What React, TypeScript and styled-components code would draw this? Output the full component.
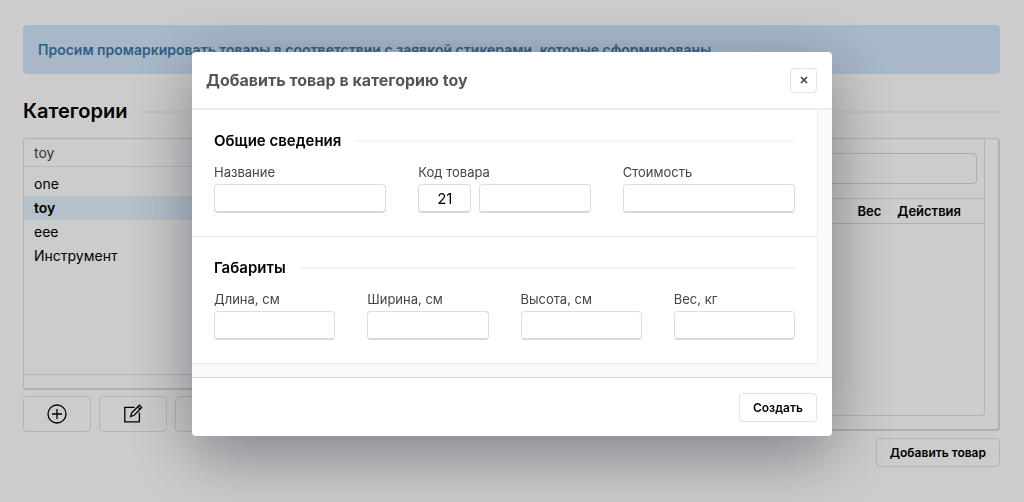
import React from 'react';
import styled, { createGlobalStyle } from 'styled-components';

const GlobalStyle = createGlobalStyle`
  *, *::before, *::after { box-sizing: border-box; }
  body {
    margin: 0;
    background: #fff;
    color: #000;
    font-family: Inter, "Liberation Sans", sans-serif;
    font-size: 14px;
  }
  button, input { font: inherit; color: inherit; }
`;

const Page = styled.main`
  min-height: 100vh;
  padding: 25px 24px 35px 23px;
`;

const Notice = styled.p`
  margin: 0;
  padding: 15px 15px 14px;
  border-radius: 4px;
  background: #d2e7fb;
  color: #3d76a8;
  font-size: 14px;
  font-weight: 600;
  line-height: 20px;
`;

const Divided = styled.div`
  display: flex;
  align-items: center;
  gap: 15px;

  &::after {
    content: '';
    flex: 1;
    height: 2px;
    background: #f4f4f4;
  }
`;

const PageHeading = styled(Divided).attrs({ as: 'h1' })`
  margin: 24px 0 13px;
  font-size: 20px;
  font-weight: 600;
  line-height: 27px;
`;

const Columns = styled.div`
  display: grid;
  grid-template-columns: 220px minmax(0, 1fr);
  align-items: start;
  gap: 16px;
`;

const Panel = styled.section`
  padding: 0 13px 13px 0;
  border: 1px solid #dcdcdc;
  border-right-width: 2px;
  border-bottom-width: 2px;
  border-radius: 4px;
`;

const CategoryPane = styled.div`
  height: 236px;
  border-right: 1px solid #dcdcdc;
  border-bottom: 1px solid #dcdcdc;
`;

const CategoryFilter = styled.input`
  display: block;
  width: 100%;
  height: 28px;
  padding: 0 10px;
  border: 0;
  border-bottom: 1px solid #e6e6e6;
  background: transparent;
  color: #444;
`;

const CategoryList = styled.ul`
  margin: 0;
  padding: 5px 0;
  list-style: none;
`;

const CategoryRow = styled.li<{ $active?: boolean }>`
  padding: 0 10px;
  background: ${({ $active }) => ($active ? '#e4f1fc' : 'transparent')};
  font-weight: ${({ $active }) => ($active ? 600 : 400)};
  line-height: 24px;
`;

const Toolbar = styled.div`
  display: grid;
  grid-template-columns: repeat(3, 1fr);
  gap: 8px;
  margin-top: 6px;
`;

const Button = styled.button`
  display: flex;
  align-items: center;
  justify-content: center;
  height: 29px;
  padding: 0 13px;
  border: 1px solid #e2e2e2;
  border-radius: 4px;
  background: #fff;
  font-size: 12px;
  font-weight: 600;
`;

const IconButton = styled(Button)`
  height: 36px;
  padding: 0;
`;

const ItemsPane = styled.div`
  min-height: 277px;
  padding-top: 14px;
  border-right: 1px solid #e0e0e0;
  border-bottom: 1px solid #e0e0e0;
  border-bottom-right-radius: 4px;
`;

const TextField = styled.input`
  display: block;
  width: 100%;
  min-width: 0;
  height: 29px;
  padding: 0 8px;
  border: 1px solid #dedede;
  border-bottom: 2px solid #d8d8d8;
  border-radius: 4px;
  background: #fff;
  font-size: 15px;
`;

const Search = styled.div`
  padding: 0 7px 14px 14px;
`;

const SearchField = styled(TextField)`
  height: 31px;
  border: 1px solid #d8d8d8;
`;

const ItemsTable = styled.table`
  width: 100%;
  border-collapse: collapse;
  border-top: 1px solid #dcdcdc;
  border-bottom: 1px solid #dcdcdc;
  font-size: 13px;

  th {
    height: 25px;
    padding: 0 8px;
    font-weight: 600;
    text-align: left;
  }
  th:first-child { width: 99%; }
  th:last-child { padding-right: 23px; }
`;

const PageActions = styled.div`
  display: flex;
  justify-content: flex-end;
  margin-top: 7px;
`;

const Overlay = styled.div`
  position: fixed;
  inset: 0;
  display: flex;
  align-items: flex-start;
  justify-content: center;
  padding-top: 52px;
  background: rgba(0, 0, 0, 0.2);
`;

const Dialog = styled.div`
  width: 640px;
  max-width: 100%;
  overflow: hidden;
  border-radius: 4px;
  background: #fff;
  box-shadow: 0 18px 66px rgba(24, 28, 46, 0.44);
`;

const DialogHeader = styled.header`
  display: flex;
  align-items: center;
  justify-content: space-between;
  height: 58px;
  padding: 0 15px 0 14px;
  border-bottom: 2px solid #ececec;
`;

const DialogTitle = styled.h2`
  margin: 0;
  color: #555;
  font-size: 16px;
  font-weight: 700;
  line-height: 20px;
`;

const CloseButton = styled(Button)`
  width: 27px;
  height: 25px;
  padding: 0;
  color: #444;
`;

const DialogBody = styled.div`
  padding: 0 14px 13px 0;
  background: #fafafa;
`;

const FormSection = styled.section`
  padding: 20px 22px 23px;
  border-right: 1px solid #ececec;
  border-bottom: 1px solid #ececec;
  background: #fff;
`;

const SectionHeading = styled(Divided).attrs({ as: 'h3' })`
  margin: 0 0 10px;
  font-size: 15px;
  font-weight: 600;
  line-height: 22px;
`;

const Fields = styled.div<{ $count: number }>`
  display: grid;
  grid-template-columns: repeat(${({ $count }) => $count}, minmax(0, 1fr));
  gap: 32px;
`;

const Label = styled.label`
  display: block;
  margin-bottom: 2px;
  color: #444;
  font-size: 13px;
  line-height: 20px;
`;

const CodeFields = styled.div`
  display: grid;
  grid-template-columns: 53px minmax(0, 1fr);
  gap: 8px;
`;

const CodePrefix = styled(TextField)`
  padding: 0;
  text-align: center;
`;

const DialogFooter = styled.footer`
  display: flex;
  justify-content: flex-end;
  padding: 15px 15px 14px;
  border-top: 1px solid #d9d9d9;
`;

const PlusIcon = () => (
  <svg width="20" height="20" viewBox="0 0 20 20" fill="none" stroke="#000" strokeWidth="1.3" aria-hidden="true">
    <circle cx="10" cy="10" r="9" />
    <path d="M10 5v10M5 10h10" />
  </svg>
);

const EditIcon = () => (
  <svg width="20" height="20" viewBox="0 0 20 20" fill="none" stroke="#000" strokeWidth="1.3" aria-hidden="true">
    <path d="M11.6 3.4H1.8v14.4h14.6V8.6" />
    <path d="M16.4 1.2l2.3 2.3-7.6 7.8-3.4 1.2 1-3.6zM14.7 2.9l2.3 2.3" />
  </svg>
);

const TrashIcon = () => (
  <svg width="20" height="20" viewBox="0 0 20 20" fill="none" stroke="#000" strokeWidth="1.3" aria-hidden="true">
    <path d="M3 5h14M7 5V2h6v3M5 5v13h10V5M8 8v7M12 8v7" />
  </svg>
);

const CloseIcon = () => (
  <svg width="8" height="8" viewBox="0 0 8 8" fill="none" stroke="currentColor" strokeWidth="1.7" aria-hidden="true">
    <path d="M1 1l6 6M7 1L1 7" />
  </svg>
);

const categories = ['one', 'toy', 'eee', 'Инструмент'];
const dimensions = [
  { id: 'length', label: 'Длина, см' },
  { id: 'width', label: 'Ширина, см' },
  { id: 'height', label: 'Высота, см' },
  { id: 'weight', label: 'Вес, кг' },
];

export default function App() {
  return (
    <>
      <GlobalStyle />
      <Page>
        <Notice>Просим промаркировать товары в соответствии с заявкой стикерами, которые сформированы</Notice>
        <PageHeading>Категории</PageHeading>
        <Columns>
          <div>
            <Panel>
              <CategoryPane>
                <CategoryFilter aria-label="Категория" defaultValue="toy" />
                <CategoryList>
                  {categories.map((name) => (
                    <CategoryRow key={name} $active={name === 'toy'}>{name}</CategoryRow>
                  ))}
                </CategoryList>
              </CategoryPane>
            </Panel>
            <Toolbar>
              <IconButton aria-label="Добавить"><PlusIcon /></IconButton>
              <IconButton aria-label="Изменить"><EditIcon /></IconButton>
              <IconButton aria-label="Удалить"><TrashIcon /></IconButton>
            </Toolbar>
          </div>
          <div>
            <Panel>
              <ItemsPane>
                <Search><SearchField type="search" aria-label="Поиск" /></Search>
                <ItemsTable>
                  <thead>
                    <tr><th /><th>Вес</th><th>Действия</th></tr>
                  </thead>
                </ItemsTable>
              </ItemsPane>
            </Panel>
            <PageActions><Button>Добавить товар</Button></PageActions>
          </div>
        </Columns>
      </Page>

      <Overlay>
        <Dialog role="dialog" aria-modal="true" aria-labelledby="dialog-title">
          <DialogHeader>
            <DialogTitle id="dialog-title">Добавить товар в категорию toy</DialogTitle>
            <CloseButton aria-label="Закрыть"><CloseIcon /></CloseButton>
          </DialogHeader>
          <DialogBody>
            <FormSection>
              <SectionHeading>Общие сведения</SectionHeading>
              <Fields $count={3}>
                <div>
                  <Label htmlFor="name">Название</Label>
                  <TextField id="name" />
                </div>
                <div>
                  <Label htmlFor="code">Код товара</Label>
                  <CodeFields>
                    <CodePrefix aria-label="Префикс кода" defaultValue="21" />
                    <TextField id="code" />
                  </CodeFields>
                </div>
                <div>
                  <Label htmlFor="price">Стоимость</Label>
                  <TextField id="price" />
                </div>
              </Fields>
            </FormSection>
            <FormSection>
              <SectionHeading>Габариты</SectionHeading>
              <Fields $count={4}>
                {dimensions.map(({ id, label }) => (
                  <div key={id}>
                    <Label htmlFor={id}>{label}</Label>
                    <TextField id={id} />
                  </div>
                ))}
              </Fields>
            </FormSection>
          </DialogBody>
          <DialogFooter><Button>Создать</Button></DialogFooter>
        </Dialog>
      </Overlay>
    </>
  );
}
